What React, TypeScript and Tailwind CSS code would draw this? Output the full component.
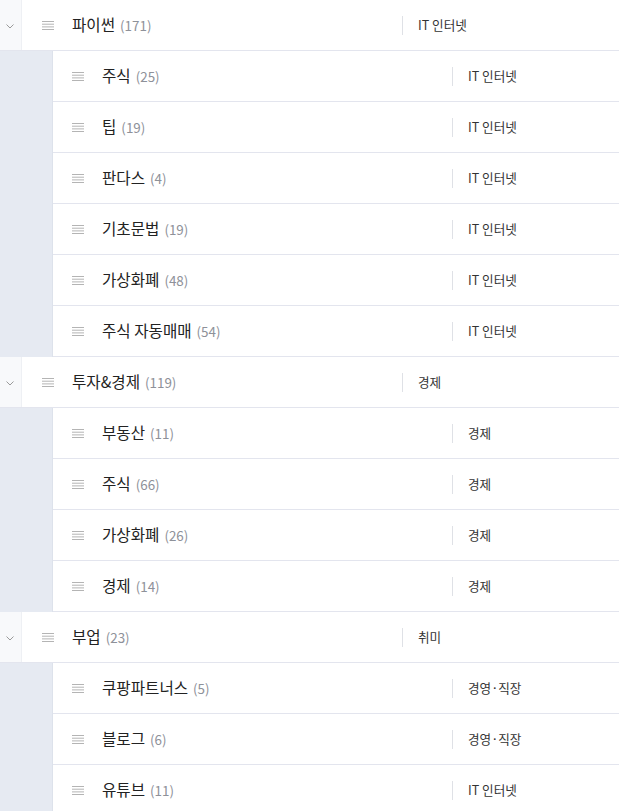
import React from 'react';

type Child = { name: string; count: number; category: string };
type Group = { name: string; count: number; category: string; children: Child[] };

const groups: Group[] = [
    {
        name: '파이썬', count: 171, category: 'IT 인터넷',
        children: [
            { name: '주식', count: 25, category: 'IT 인터넷' },
            { name: '팁', count: 19, category: 'IT 인터넷' },
            { name: '판다스', count: 4, category: 'IT 인터넷' },
            { name: '기초문법', count: 19, category: 'IT 인터넷' },
            { name: '가상화폐', count: 48, category: 'IT 인터넷' },
            { name: '주식 자동매매', count: 54, category: 'IT 인터넷' },
        ],
    },
    {
        name: '투자&경제', count: 119, category: '경제',
        children: [
            { name: '부동산', count: 11, category: '경제' },
            { name: '주식', count: 66, category: '경제' },
            { name: '가상화폐', count: 26, category: '경제' },
            { name: '경제', count: 14, category: '경제' },
        ],
    },
    {
        name: '부업', count: 23, category: '취미',
        children: [
            { name: '쿠팡파트너스', count: 5, category: '경영·직장' },
            { name: '블로그', count: 6, category: '경영·직장' },
            { name: '유튜브', count: 11, category: 'IT 인터넷' },
        ],
    },
];

const DragHandle = () => (
    <svg width="12" height="10" viewBox="0 0 12 10" className="shrink-0">
        <g stroke="#b4b4b4" strokeWidth="1">
            <line x1="0" y1="1.5" x2="12" y2="1.5" />
            <line x1="0" y1="4.2" x2="12" y2="4.2" />
            <line x1="0" y1="6.9" x2="12" y2="6.9" />
            <line x1="0" y1="9.5" x2="12" y2="9.5" />
        </g>
    </svg>
);

const Chevron = () => (
    <svg width="8" height="5" viewBox="0 0 8 5">
        <path d="M0.5 0.5 L4 4 L7.5 0.5" fill="none" stroke="#9a9a9a" strokeWidth="1" />
    </svg>
);

const Title = ({ name, count }: { name: string; count: number }) => (
    <div className="flex items-baseline gap-[5px] whitespace-nowrap">
        <span className="text-[15.6px] text-[#222]">{name}</span>
        <span className="text-[13.4px] text-[#8e9199]">({count})</span>
    </div>
);

const Category = ({ label }: { label: string }) => (
    <div className="flex items-center">
        <div className="w-px h-[19px] bg-[#dfe1e6]" />
        <span className="ml-[15px] text-[12.6px] text-[#333] whitespace-nowrap">{label}</span>
    </div>
);

export default function App() {
    return (
        <div
            className="w-[619px] h-[811px] overflow-hidden bg-white"
            style={{ fontFamily: '"Noto Sans CJK KR", "Noto Sans", sans-serif' }}
        >
            {groups.map((g) => (
                <div key={g.name}>
                    {/* parent row */}
                    <div className="flex h-[51px] border-b border-[#e3e5ee]">
                        <div className="w-[22px] shrink-0 bg-[#f8f9fb] border-r border-[#eef0f4] flex items-center justify-center pr-px pt-[2px]">
                            <Chevron />
                        </div>
                        <div className="flex items-center">
                            <div className="w-[380px] flex items-center pl-5">
                                <DragHandle />
                                <div className="ml-[18px]">
                                    <Title name={g.name} count={g.count} />
                                </div>
                            </div>
                            <Category label={g.category} />
                        </div>
                    </div>

                    {/* child rows */}
                    {g.children.map((c, i) => (
                        <div key={c.name + i} className="flex h-[51px]">
                            <div className="w-[53px] shrink-0 bg-[#e6eaf2] border-r border-[#dde2eb]" />
                            <div className="flex-1 flex items-center border-b border-[#e3e5ee]">
                                <div className="w-[399px] flex items-center pl-[19px]">
                                    <DragHandle />
                                    <div className="ml-[18px]">
                                        <Title name={c.name} count={c.count} />
                                    </div>
                                </div>
                                <Category label={c.category} />
                            </div>
                        </div>
                    ))}
                </div>
            ))}
        </div>
    );
}
